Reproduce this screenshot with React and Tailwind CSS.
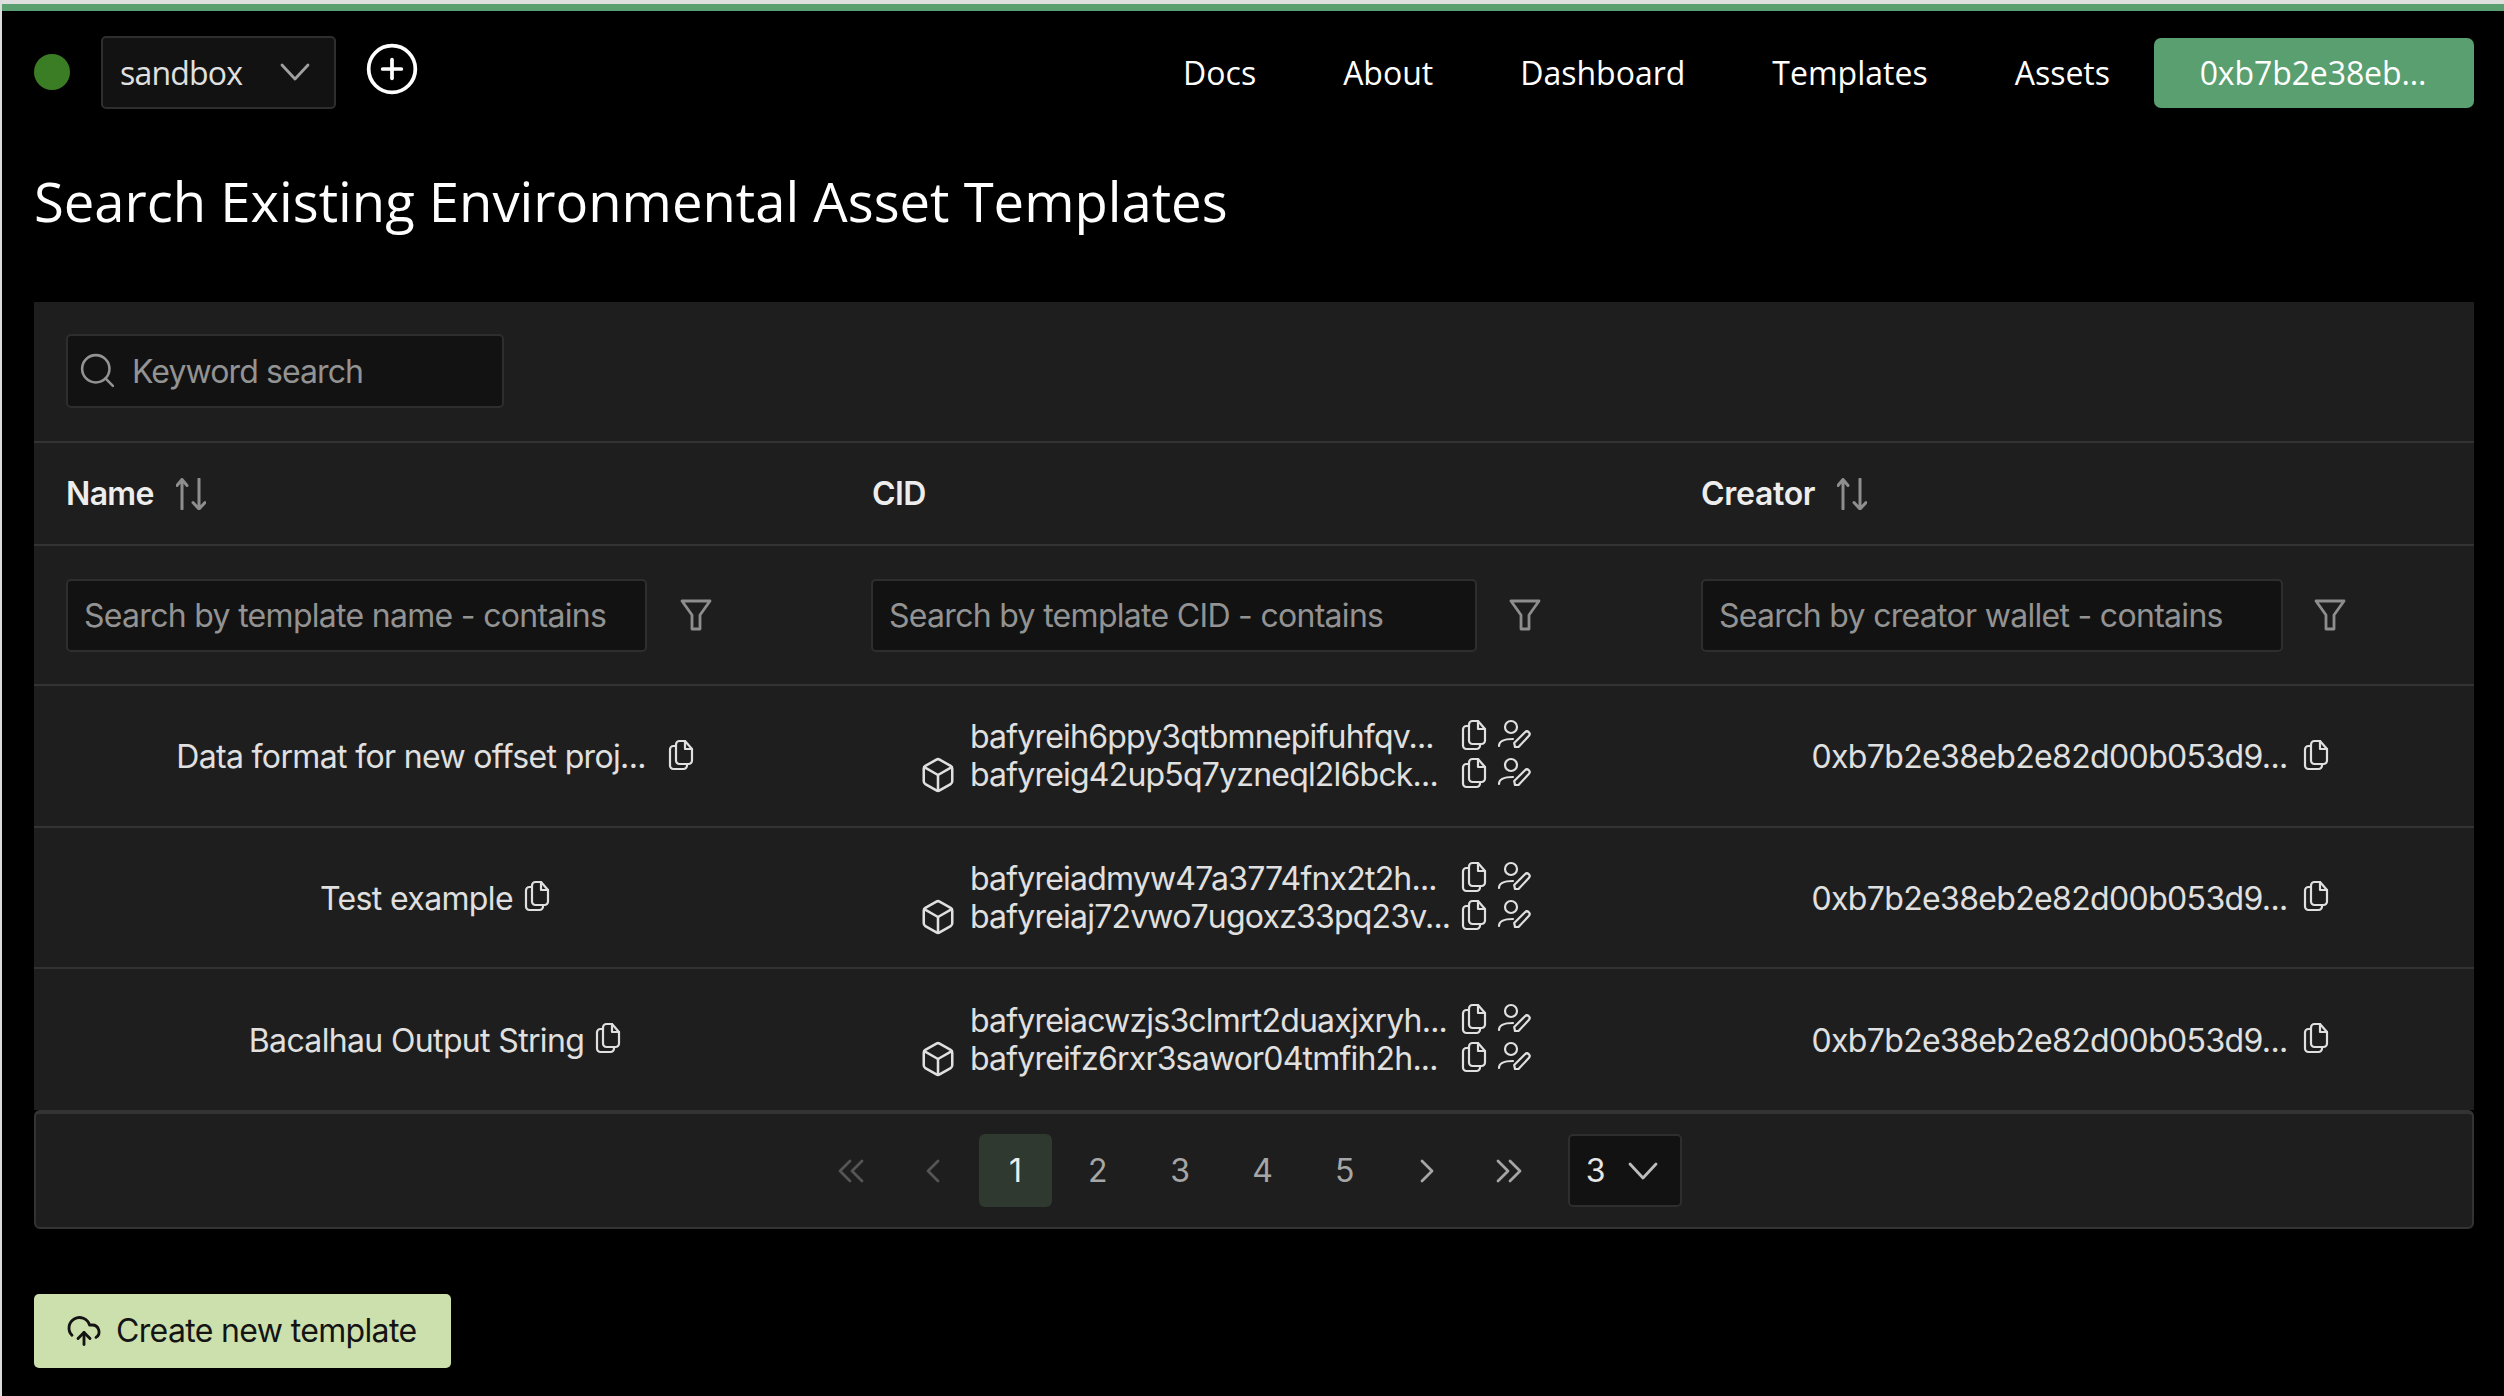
import React from "react";
import { CirclePlus, Search, Box, CloudUpload } from "lucide-react";

const CopyIcon = ({ className = "" }) => (
  <svg viewBox="0 0 26 32" fill="none" stroke="currentColor" strokeWidth="2.2" strokeLinecap="round" strokeLinejoin="round" className={className}>
    <path d="M8 7H5.5A3.5 3.5 0 0 0 2 10.5v16A3.5 3.5 0 0 0 5.500 30h10a3.500 3.500 0 0 0 3.500-3.500V25" />
    <path d="M8 5.500A3.500 3.500 0 0 1 11.500 2H17l7 8v11.500a3.500 3.500 0 0 1-3.500 3.500h-9A3.500 3.500 0 0 1 8 21.500z" />
    <path d="M17 2v8h7" />
  </svg>
);

const PersonPen = () => (
  <svg viewBox="0 0 34 30" fill="none" stroke="#e0e0e0" strokeWidth="2.2" strokeLinecap="round" strokeLinejoin="round" className="w-[34px] h-[30px] ml-[10px] shrink-0 -mt-[6px]">
    <circle cx="14" cy="8" r="6" />
    <path d="M2 27c0-5 4-7 14-7" />
    <path d="M18 28l-.8-4L28 13.200a2.600 2.600 0 0 1 3.800 3.800L21.500 28z" />
  </svg>
);

const SortIcon = () => (
  <svg viewBox="0 0 30 32" fill="none" stroke="#8e8e8e" strokeWidth="3" strokeLinecap="round" strokeLinejoin="round" className="w-[30px] h-[32px] shrink-0">
    <path d="M6 31V1.500M1 7.500l5-6 5 6" />
    <path d="M23 1v30M17 24.500l6 6.500 6-6.500" />
  </svg>
);

const FilterIcon = () => (
  <svg viewBox="0 0 32 32" fill="none" stroke="#8e8e8e" strokeWidth="2.800" strokeLinejoin="round" className="w-[32px] h-[32px] shrink-0">
    <path d="M2 2h28L20 16v14h-8V16z" />
  </svg>
);

const Caret = ({ color }) => (
  <svg viewBox="0 0 30 18" fill="none" stroke={color} strokeWidth="2.800" strokeLinecap="round" strokeLinejoin="round" className="w-[30px] h-[18px] shrink-0">
    <path d="M2 2l13 14L28 2" />
  </svg>
);

const Chev = ({ color, flip, double }) => (
  <svg viewBox="0 0 28 24" fill="none" stroke={color} strokeWidth="2.800" strokeLinecap="round" strokeLinejoin="round" className={`w-[28px] h-[24px] ${flip ? "rotate-180" : ""}`}>
    {double ? (
      <>
        <path d="M13 2L3 12l10 10" />
        <path d="M25 2L15 12l10 10" />
      </>
    ) : (
      <path d="M19 2L9 12l10 10" />
    )}
  </svg>
);

const Cid = ({ text, withBox }) => (
  <div className="flex items-center h-[38px]">
    <div className="w-[49px] shrink-0">
      {withBox && <Box className="w-[38px] h-[38px] -ml-[2px] text-[#e0e0e0]" strokeWidth={1.6} />}
    </div>
    <span className="w-[491px] shrink-0 whitespace-nowrap tracking-[-0.8px]">{text}</span>
    <CopyIcon className="w-[26px] h-[32px] shrink-0 text-[#e0e0e0] -mt-[4px]" />
    <PersonPen />
  </div>
);

const rows = [
  { name: "Data format for new offset proj...", pad: "pr-[11px]", h: "h-[142px] border-b-2 border-[#333333]", a: "bafyreih6ppy3qtbmnepifuhfqv...", b: "bafyreig42up5q7yzneql2l6bck..." },
  { name: "Test example", pad: "", h: "h-[141px] border-b-2 border-[#333333]", a: "bafyreiadmyw47a3774fnx2t2h...", b: "bafyreiaj72vwo7ugoxz33pq23v..." },
  { name: "Bacalhau Output String", pad: "", h: "h-[141px]", a: "bafyreiacwzjs3clmrt2duaxjxryh...", b: "bafyreifz6rxr3sawor04tmfih2h..." },
];

const COLS = "grid grid-cols-[806px_829px_805px]";

const FilterInput = ({ placeholder, w, gap, pl }) => (
  <div className={`flex items-center ${pl}`}>
    <input readOnly placeholder={placeholder} className={`${w} h-[73px] px-[16px] rounded-[5px] border-2 border-[#2e2e2e] bg-[#121212] text-[32px] tracking-[-0.7px] placeholder:text-[#939393] outline-none`} />
    <div className={gap}><FilterIcon /></div>
  </div>
);

const PageBtn = ({ children, active }) => (
  <div className={`w-[73px] h-[73px] rounded-[6px] flex items-center justify-center text-[32px] ${active ? "bg-[#2f392f] text-[#ededed]" : "text-[#a6a6a6]"}`}>{children}</div>
);

export default function App() {
  return (
    <div className="min-h-[1396px] h-[1396px] overflow-hidden bg-black border-l-2 border-[#dcdcdc] text-[#e0e0e0] font-['Inter',sans-serif] tracking-[-0.65px]">
      <div className="h-[4px] -ml-[2px] bg-[#dfdfdf]" />
      <div className="h-[7px] bg-[#5a9f6f]" />
      <header className="h-[122px] flex items-center pl-[32px] pr-[30px] font-['Open_Sans',sans-serif] text-[32px] text-white tracking-normal">
        <div className="w-[36px] h-[36px] rounded-full bg-[#3a7d24]" />
        <div className="ml-[31px] w-[235px] h-[73px] flex items-center justify-between pl-[17px] pr-[24px] rounded-[5px] border-2 border-[#2e2e2e] bg-[#121212] text-[#e0e0e0]">
          <span className="tracking-[-0.8px] mt-[2px]">sandbox</span>
          <Caret color="#a0a0a0" />
        </div>
        <CirclePlus className="ml-[28px] -mt-[6px] w-[56px] h-[56px] text-white" strokeWidth={1.6} />
        <nav className="ml-auto flex items-center gap-[87px] mr-[44px] mt-[2px]">
          <span>Docs</span><span>About</span><span>Dashboard</span><span>Templates</span><span>Assets</span>
        </nav>
        <div className="w-[320px] h-[70px] mt-[1px] pr-[2px] rounded-[7px] bg-[#5a9f6f] flex items-center justify-center tracking-[-0.1px]">0xb7b2e38eb...</div>
      </header>
      <h1 className="h-[140px] -mt-[1px] mb-[30px] pl-[32px] flex items-center font-['Open_Sans',sans-serif] font-normal text-[54.4px] text-white tracking-normal">
        Search Existing Environmental Asset Templates
      </h1>
      <main className="ml-[32px] w-[2440px]">
        <div className="bg-[#1e1e1e]">
          <div className="h-[141px] border-b-2 border-[#333333] flex items-center pl-[32px]">
            <div className="w-[438px] h-[74px] -mt-[2px] flex items-center rounded-[5px] border-2 border-[#2e2e2e] bg-[#121212] pl-[9px] text-[#939393] text-[32px]">
              <Search className="w-[41px] h-[41px] text-[#939393]" strokeWidth={1.5} />
              <span className="ml-[14px] mt-[2px] tracking-[-0.9px]">Keyword search</span>
            </div>
          </div>
          <div className={`${COLS} h-[103px] border-b-2 border-[#333333] items-center font-semibold text-[32px] text-[#ededed]`}>
            <div className="pl-[32px] flex items-center gap-[22px]">Name <SortIcon /></div>
            <div className="pl-[32px]">CID</div>
            <div className="pl-[32px] flex items-center gap-[22px]"><span className="tracking-[-0.3px]">Creator</span> <SortIcon /></div>
          </div>
          <div className={`${COLS} h-[140px] border-b-2 border-[#333333] items-center`}>
            <FilterInput placeholder="Search by template name - contains" w="w-[581px]" gap="ml-[33px]" pl="pl-[32px]" />
            <FilterInput placeholder="Search by template CID - contains" w="w-[606px]" gap="ml-[32px]" pl="pl-[31px]" />
            <FilterInput placeholder="Search by creator wallet - contains" w="w-[582px]" gap="ml-[31px]" pl="pl-[32px]" />
          </div>
          {rows.map((r) => (
            <div key={r.name} className={`${COLS} ${r.h} items-center text-[32px]`}>
              <div className="flex items-center justify-center gap-[11px] pr-[4px]">
                <span className={`whitespace-nowrap mt-[2px] ${r.pad}`}>{r.name}</span>
                <CopyIcon className="w-[26px] h-[32px] shrink-0 -mt-[3px]" />
              </div>
              <div className="pl-[81px] flex flex-col">
                <Cid text={r.a} />
                <Cid text={r.b} withBox />
              </div>
              <div className="flex items-center justify-center gap-[15px] pr-[3px]">
                <span className="whitespace-nowrap mt-[2px]">0xb7b2e38eb2e82d00b053d9...</span>
                <CopyIcon className="w-[26px] h-[32px] shrink-0 -mt-[3px]" />
              </div>
            </div>
          ))}
        </div>
        <div className="h-[119px] rounded-[6px] border-2 border-t-4 border-[#333333] bg-[#1e1e1e] flex items-center justify-center">
          <div className="flex items-center gap-[9.300px] mr-[12px]">
            <PageBtn><Chev color="#555555" double /></PageBtn>
            <PageBtn><Chev color="#555555" /></PageBtn>
            <PageBtn active>1</PageBtn>
            <PageBtn>2</PageBtn>
            <PageBtn>3</PageBtn>
            <PageBtn>4</PageBtn>
            <PageBtn>5</PageBtn>
            <PageBtn><Chev color="#a6a6a6" flip /></PageBtn>
            <PageBtn><Chev color="#a6a6a6" flip double /></PageBtn>
            <div className="ml-[13px] w-[114px] h-[73px] flex items-center justify-between pl-[16px] pr-[22px] rounded-[5px] border-2 border-[#2e2e2e] bg-[#121212] text-[32px] text-[#e6e6e6]">
              <span>3</span>
              <Caret color="#bdbdbd" />
            </div>
          </div>
        </div>
        <button className="mt-[65px] w-[417px] h-[74px] rounded-[5px] bg-[#cce0ad] flex items-center pl-[32px] text-[32px] text-[#141414]">
          <CloudUpload className="w-[36px] h-[36px]" strokeWidth={1.900} />
          <span className="ml-[14px]">Create new template</span>
        </button>
      </main>
    </div>
  );
}
